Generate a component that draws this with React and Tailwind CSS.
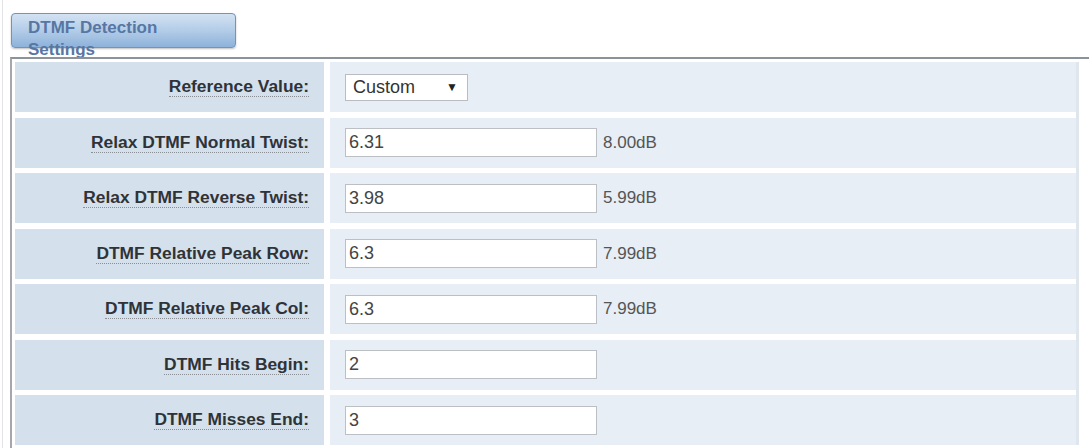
import React from "react";

const rows = [
  { label: "Relax DTMF Normal Twist:", value: "6.31", unit: "8.00dB" },
  { label: "Relax DTMF Reverse Twist:", value: "3.98", unit: "5.99dB" },
  { label: "DTMF Relative Peak Row:", value: "6.3", unit: "7.99dB" },
  { label: "DTMF Relative Peak Col:", value: "6.3", unit: "7.99dB" },
  { label: "DTMF Hits Begin:", value: "2" },
  { label: "DTMF Misses End:", value: "3" },
];

function Label({ children }) {
  return (
    <div className="w-[309px] shrink-0 bg-[#d4e0eb] flex items-center justify-end pr-[15px]">
      <span className="text-[17.4px] font-bold text-[#2f3338] leading-[19px] border-b border-dotted border-[#8a8f96]">
        {children}
      </span>
    </div>
  );
}

export default function App() {
  return (
    <div className="w-[1092px] h-[448px] bg-white overflow-hidden font-['Liberation_Sans',Arial,sans-serif]">
      <div className="ml-[2px] h-full border-l border-[#e2e4e7] pl-[7px]">
        {/* tab header */}
        <div className="pt-[13px] h-[57px] relative z-0">
          <div className="ml-[1px] w-[225px] h-[35px] rounded-[4px] border border-[#7492bb] bg-gradient-to-b from-[#d3e2f2] via-[#b3cce8] to-[#8db2da] shadow-[0_1px_2px_rgba(0,0,0,0.25)] pl-[16px] pt-[3px]">
            <span className="block text-[17px] font-bold leading-[22px] text-[#5876a3] w-[150px]">
              DTMF Detection Settings
            </span>
          </div>
        </div>

        {/* settings table */}
        <div className="relative z-10 w-[1079px] h-[391px] bg-white border-t-2 border-l-2 border-t-[#8c929a] border-l-[#a4a8ad] pt-[3px] pl-[3px] pr-[2px]">
          <div className="flex flex-col gap-[5.5px] border-r-[3px] border-[#dfe6ee] w-[1064px]">
            <div className="flex h-[50px] gap-[6px]">
              <Label>Reference Value:</Label>
              <div className="flex-1 bg-[#e7eef6] flex items-center pl-[15px]">
                <div className="w-[123px] h-[27px] bg-white border border-[#b9bcc0] flex items-center justify-between pl-[7px] pr-[9px] text-[18px] text-[#333]">
                  <span>Custom</span>
                  <span className="text-[12px] text-[#222]">▼</span>
                </div>
              </div>
            </div>
            {rows.map((r) => (
              <div key={r.label} className="flex h-[50px] gap-[6px]">
                <Label>{r.label}</Label>
                <div className="flex-1 bg-[#e7eef6] flex items-center pl-[15px]">
                  <input
                    defaultValue={r.value}
                    className="w-[252px] h-[29px] bg-white border border-[#bcbfc3] px-[3px] text-[18px] text-[#444] outline-none"
                  />
                  {r.unit && (
                    <span className="ml-[6px] text-[17px] text-[#555]">{r.unit}</span>
                  )}
                </div>
              </div>
            ))}
          </div>
        </div>
      </div>
    </div>
  );
}
